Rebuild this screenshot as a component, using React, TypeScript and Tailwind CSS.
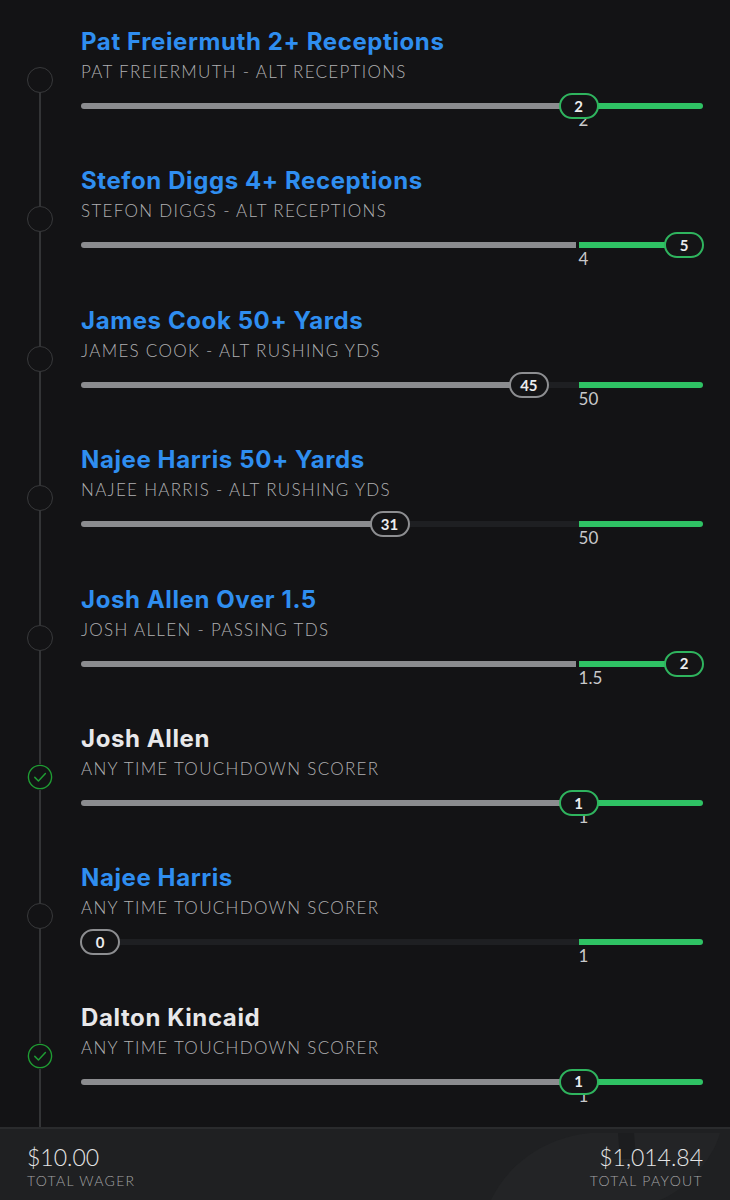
import React from "react";

type Leg = {
  title: string;
  market: string;
  value: number;
  line: number;
  won?: boolean;
};

const legs: Leg[] = [
  { title: "Pat Freiermuth 2+ Receptions", market: "PAT FREIERMUTH - ALT RECEPTIONS", value: 2, line: 2 },
  { title: "Stefon Diggs 4+ Receptions", market: "STEFON DIGGS - ALT RECEPTIONS", value: 5, line: 4 },
  { title: "James Cook 50+ Yards", market: "JAMES COOK - ALT RUSHING YDS", value: 45, line: 50 },
  { title: "Najee Harris 50+ Yards", market: "NAJEE HARRIS - ALT RUSHING YDS", value: 31, line: 50 },
  { title: "Josh Allen Over 1.5", market: "JOSH ALLEN - PASSING TDS", value: 2, line: 1.5 },
  { title: "Josh Allen", market: "ANY TIME TOUCHDOWN SCORER", value: 1, line: 1, won: true },
  { title: "Najee Harris", market: "ANY TIME TOUCHDOWN SCORER", value: 0, line: 1 },
  { title: "Dalton Kincaid", market: "ANY TIME TOUCHDOWN SCORER", value: 1, line: 1, won: true },
];

const font = { fontFamily: '"Lato", "Open Sans", sans-serif' };
const headFont = { fontFamily: '"Inter", "Lato", sans-serif' };

function StatusDot({ won }: { won?: boolean }) {
  if (won) {
    return (
      <svg width="26" height="26" viewBox="0 0 26 26" className="shrink-0">
        <circle cx="13" cy="13" r="11.6" fill="none" stroke="#1f9c33" strokeWidth="1.4" />
        <path d="M7.8 13.4 L11.4 17 L18.4 9.6" fill="none" stroke="#1f9c33" strokeWidth="1.5" strokeLinecap="round" strokeLinejoin="round" />
      </svg>
    );
  }
  return <div className="w-[26px] h-[26px] shrink-0 rounded-full border-[1.6px] border-[#38393b]" />;
}

function ProgressBar({ value, line }: { value: number; line: number }) {
  const hit = value >= line;
  // line sits at 80% of the track; anything past it pins to the end
  const pos = hit ? (value > line ? 100 : 80) : (value / line) * 80;
  const over = value > line;

  return (
    <div className="relative">
      <div className="flex h-[6px] items-stretch">
        {hit ? (
          <>
            <div className="h-full rounded-l-full bg-[#8b8c8f]" style={{ width: "calc(80% - 3px)" }} />
            <div className="ml-[3px] h-full flex-1 rounded-r-full bg-[#2fc264]" />
          </>
        ) : (
          <>
            <div className="h-full rounded-l-full bg-[#8b8c8f]" style={{ width: `${pos}%` }} />
            <div className="h-full flex-1 bg-[#1e1f22]" />
            <div className="h-full w-[20%] rounded-r-full bg-[#2fc264]" />
          </>
        )}
      </div>
      <div className="pl-[80%] pt-[1px] text-[17px] leading-[19px] text-[#c9c9cb]" style={font}>
        {line}
      </div>
      <div
        className={
          "absolute top-[3px] flex h-[26px] w-[40px] -translate-y-1/2 items-center justify-center rounded-full border-2 bg-[#141416] text-[15px] font-bold text-[#ececee] " +
          (hit ? "border-[#2fb45e]" : "border-[#8d8e91]")
        }
        style={{
          ...font,
          left: over ? "calc(100% - 39px)" : `clamp(-1px, calc(${pos}% - 20px), calc(100% - 39px))`,
        }}
      >
        {value}
      </div>
    </div>
  );
}

function LegRow({ leg, first, last }: { leg: Leg; first: boolean; last: boolean }) {
  return (
    <div className={"flex " + (last ? "h-[151.2px]" : "h-[139.4px]")}>
      <div className="flex w-[81px] shrink-0 flex-col items-center pr-[1px]">
        <div className={"h-[67px] w-[2px] " + (first ? "" : "bg-[#333436]")} />
        <StatusDot won={leg.won} />
        <div className="w-[2px] flex-1 bg-[#333436]" />
      </div>
      <div className="flex-1 pr-[27px] pt-[28px]">
        <div
          className={"text-[24px] font-bold leading-[28px] tracking-[0.6px] " + (leg.won ? "text-[#e8e8ea]" : "text-[#2f8ef0]")}
          style={headFont}
        >
          {leg.title}
        </div>
        <div className="mt-[5px] text-[17px] font-light leading-[22px] tracking-[1.3px] text-[#b0b0b2]" style={font}>
          {leg.market}
        </div>
        <div className="mt-[20px]">
          <ProgressBar value={leg.value} line={leg.line} />
        </div>
      </div>
    </div>
  );
}

export default function App() {
  return (
    <div className="flex h-[1200px] w-[730px] flex-col overflow-hidden bg-[#131315]">
      <div className="flex flex-col">
        {legs.map((leg, i) => (
          <LegRow key={i} leg={leg} first={i === 0} last={i === legs.length - 1} />
        ))}
      </div>
      <div className="relative flex flex-1 items-center justify-between overflow-hidden border-t-2 border-[#2a2b2d] bg-[#1f2022] px-[27px] pt-[5px]">
        <svg className="absolute right-0 top-0" width="260" height="73" viewBox="0 0 260 73">
          <path d="M20 73 C40 30 80 8 120 4 L250 4 C240 40 200 73 180 73 Z" fill="#232426" />
          <path d="M148 4 L164 4 L166 30 L150 30 Z" fill="#1c1d1f" />
        </svg>
        <div className="relative" style={font}>
          <div className="text-[23px] leading-[26px] font-light text-[#e4e4e6]">$10.00</div>
          <div className="mt-[2px] text-[14px] font-light leading-[18px] tracking-[1.3px] text-[#a2a2a4]">TOTAL WAGER</div>
        </div>
        <div className="relative text-right" style={font}>
          <div className="text-[23px] leading-[26px] font-light text-[#e4e4e6]">$1,014.84</div>
          <div className="mt-[2px] text-[14px] font-light leading-[18px] tracking-[1.3px] text-[#a2a2a4]">TOTAL PAYOUT</div>
        </div>
      </div>
    </div>
  );
}
